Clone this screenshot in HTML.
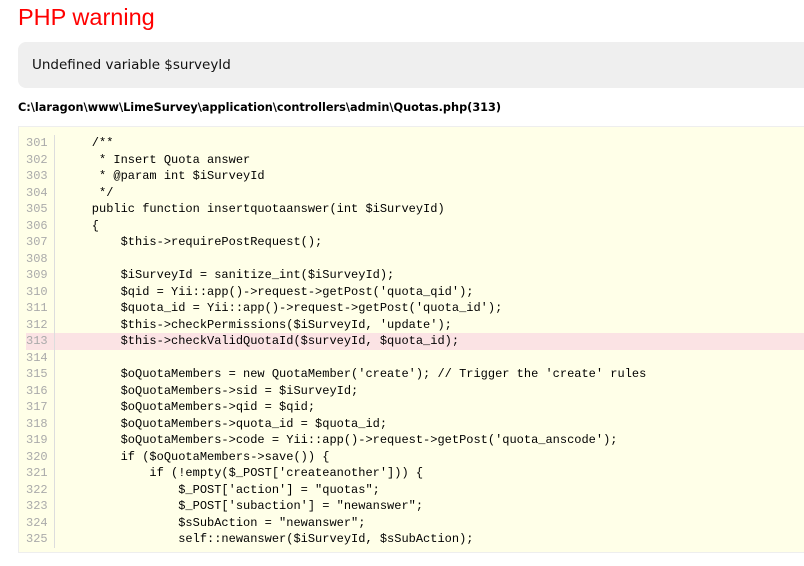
<!DOCTYPE html>
<html><head><style>
body{margin:0;background:#fff;font-family:"Liberation Sans",Arial,sans-serif;width:804px;height:566px;overflow:hidden;position:relative}
h1{position:absolute;left:18px;top:4px;margin:0;font-weight:normal;font-size:23.5px;color:#f00}
.msg{position:absolute;left:18px;top:42px;width:800px;height:46px;background:#efefef;border-radius:8px;font-family:"DejaVu Sans",sans-serif;font-size:13.5px;line-height:46px;padding-left:14px;box-sizing:border-box;color:#111}
.path{position:absolute;left:18px;top:101px;font-family:"DejaVu Sans",sans-serif;font-size:11.3px;font-weight:bold;color:#000}
.code{position:absolute;left:18px;top:126px;width:800px;height:427px;background:#ffffe8;border:1px solid #eee;box-sizing:border-box}
.ln{position:absolute;left:7px;top:8px;right:0;font-family:"Liberation Mono",monospace;font-size:12px}
.r{height:16.5px;line-height:16.5px;white-space:pre;position:relative}
.r b{font-weight:normal;display:inline-block;width:28px;color:#aaa;border-right:1px solid #ddd;margin-right:8px;text-align:left}
.r.h{background:#fbe3e4}
</style></head><body>
<h1>PHP warning</h1>
<div class="msg">Undefined variable $surveyId</div>
<div class="path">C:\laragon\www\LimeSurvey\application\controllers\admin\Quotas.php(313)</div>
<div class="code"><div class="ln">
<div class="r"><b>301</b>    /**</div>
<div class="r"><b>302</b>     * Insert Quota answer</div>
<div class="r"><b>303</b>     * @param int $iSurveyId</div>
<div class="r"><b>304</b>     */</div>
<div class="r"><b>305</b>    public function insertquotaanswer(int $iSurveyId)</div>
<div class="r"><b>306</b>    {</div>
<div class="r"><b>307</b>        $this-&gt;requirePostRequest();</div>
<div class="r"><b>308</b></div>
<div class="r"><b>309</b>        $iSurveyId = sanitize_int($iSurveyId);</div>
<div class="r"><b>310</b>        $qid = Yii::app()-&gt;request-&gt;getPost('quota_qid');</div>
<div class="r"><b>311</b>        $quota_id = Yii::app()-&gt;request-&gt;getPost('quota_id');</div>
<div class="r"><b>312</b>        $this-&gt;checkPermissions($iSurveyId, 'update');</div>
<div class="r h"><b>313</b>        $this-&gt;checkValidQuotaId($surveyId, $quota_id);</div>
<div class="r"><b>314</b></div>
<div class="r"><b>315</b>        $oQuotaMembers = new QuotaMember('create'); // Trigger the 'create' rules</div>
<div class="r"><b>316</b>        $oQuotaMembers-&gt;sid = $iSurveyId;</div>
<div class="r"><b>317</b>        $oQuotaMembers-&gt;qid = $qid;</div>
<div class="r"><b>318</b>        $oQuotaMembers-&gt;quota_id = $quota_id;</div>
<div class="r"><b>319</b>        $oQuotaMembers-&gt;code = Yii::app()-&gt;request-&gt;getPost('quota_anscode');</div>
<div class="r"><b>320</b>        if ($oQuotaMembers-&gt;save()) {</div>
<div class="r"><b>321</b>            if (!empty($_POST['createanother'])) {</div>
<div class="r"><b>322</b>                $_POST['action'] = "quotas";</div>
<div class="r"><b>323</b>                $_POST['subaction'] = "newanswer";</div>
<div class="r"><b>324</b>                $sSubAction = "newanswer";</div>
<div class="r"><b>325</b>                self::newanswer($iSurveyId, $sSubAction);</div>
</div></div>
</body></html>
